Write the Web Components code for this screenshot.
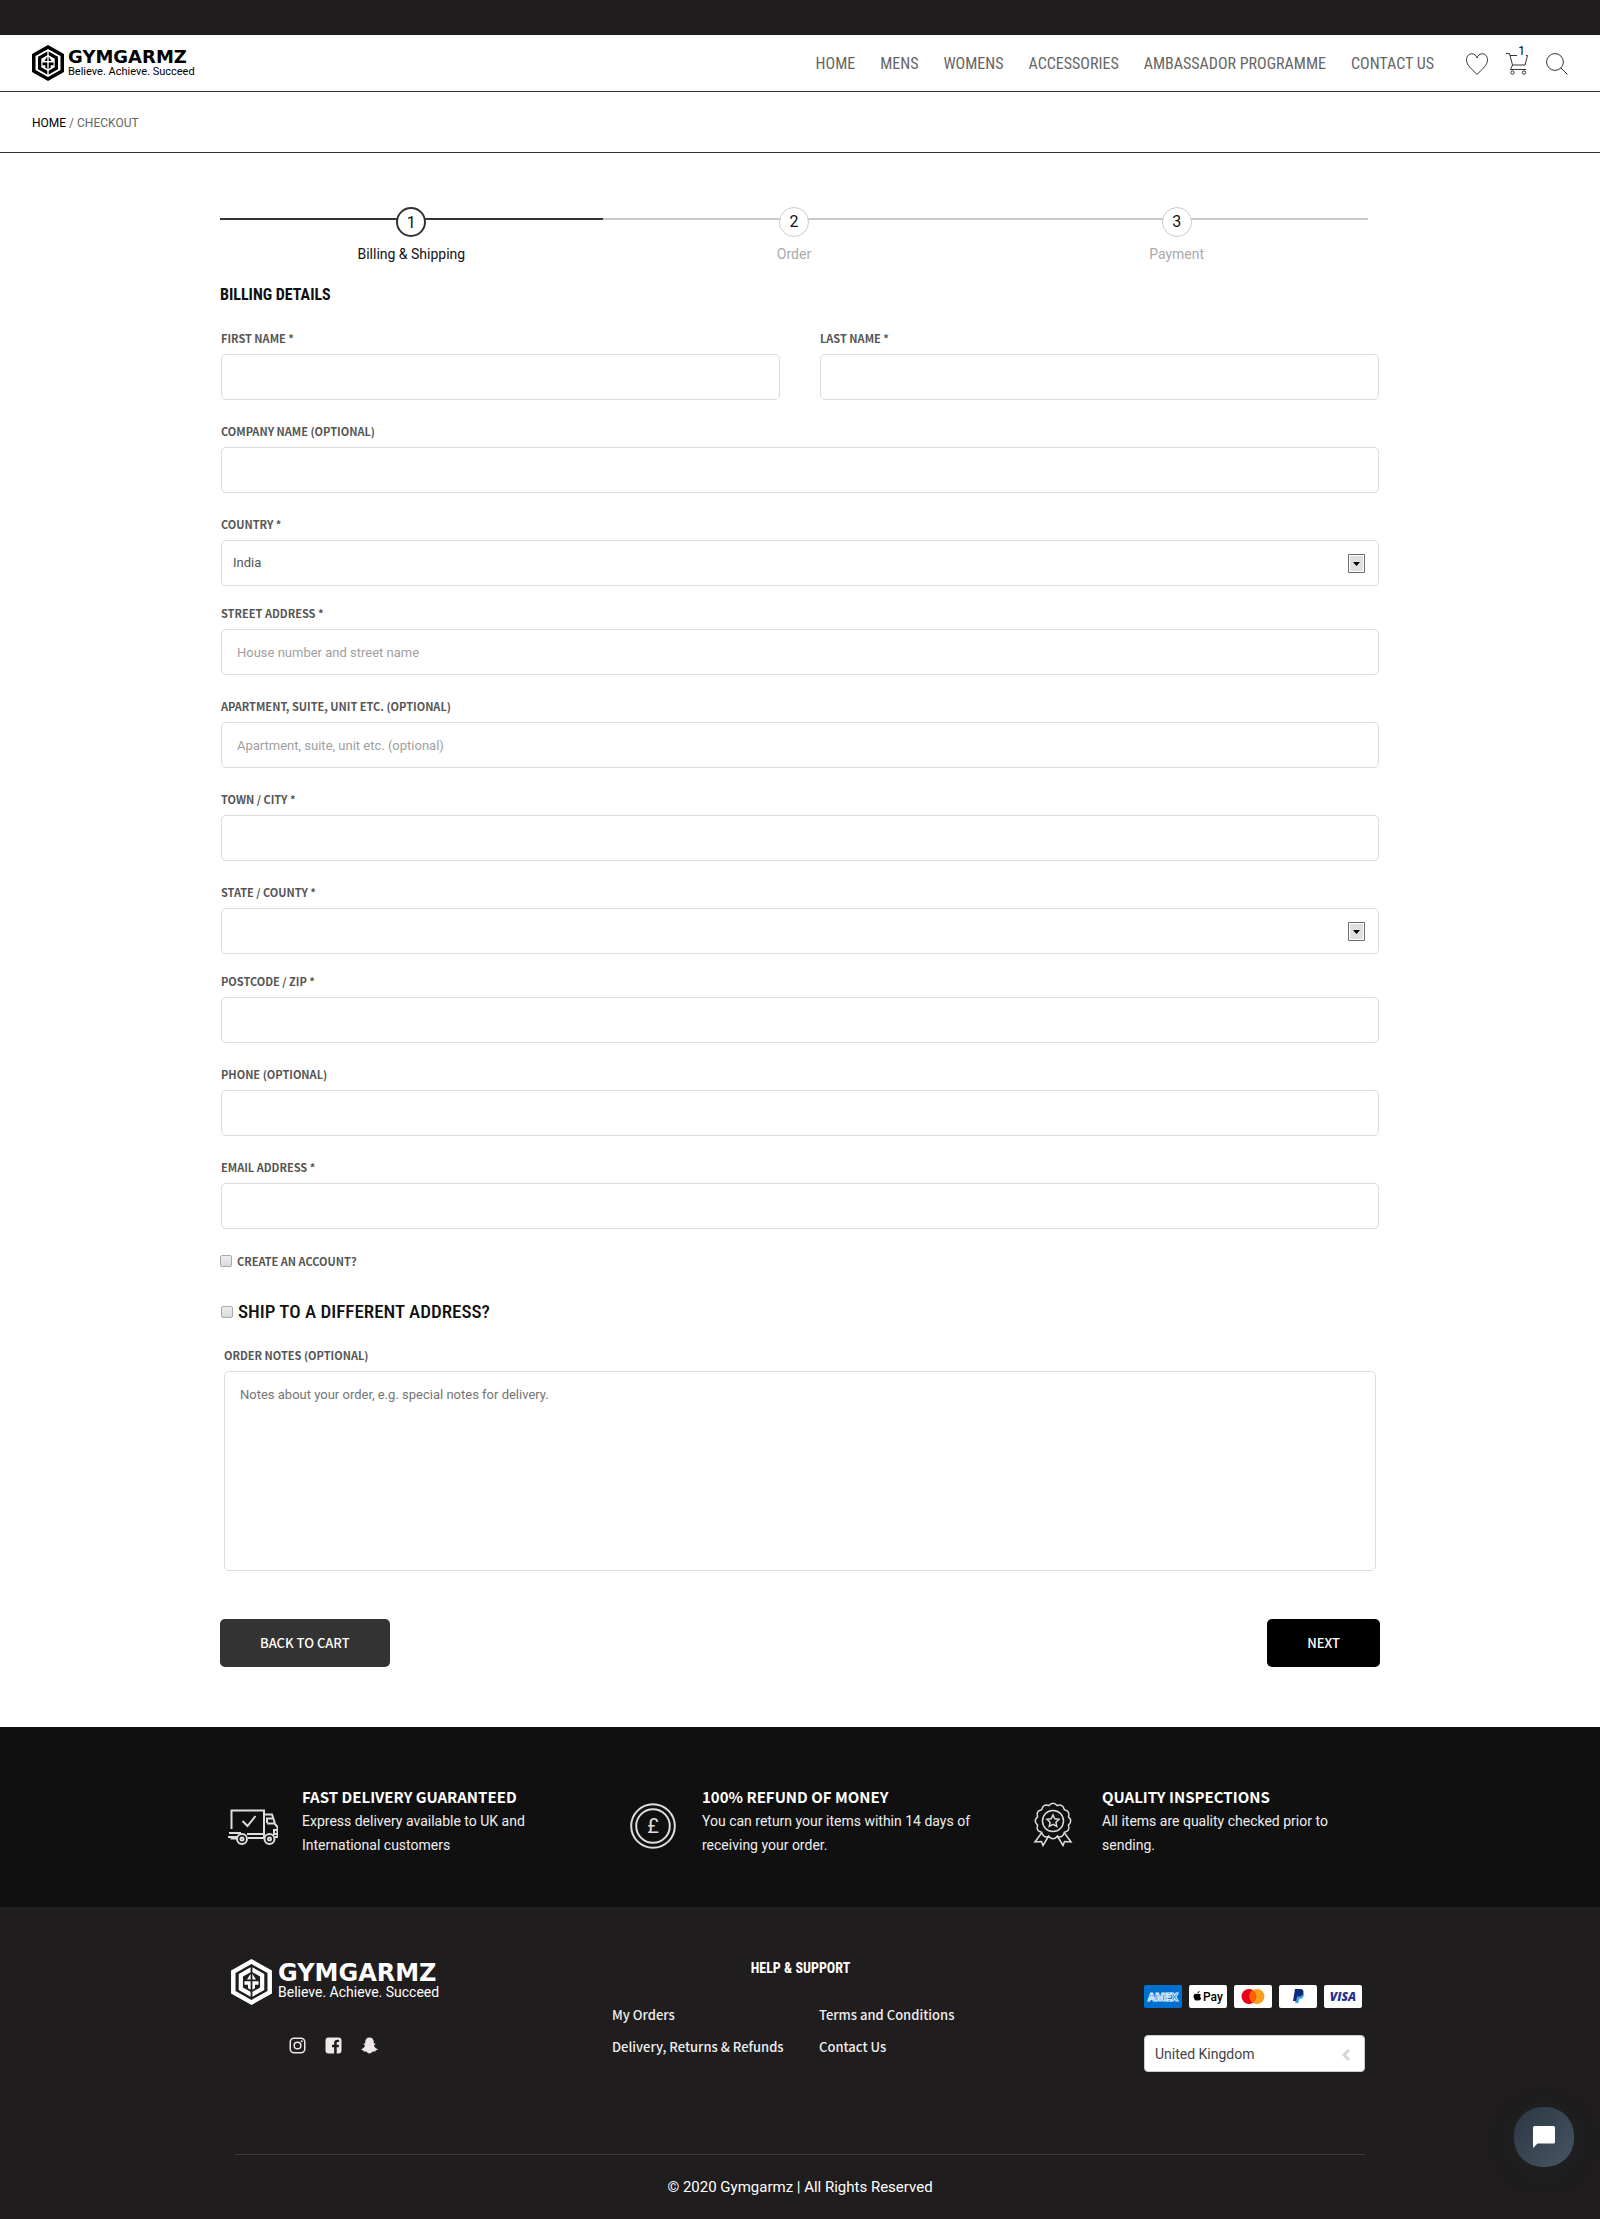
<!DOCTYPE html>
<html lang="en">
<head>
    <meta charset="UTF-8">
    <meta name="viewport" content="width=device-width, initial-scale=1.0">
    <title>Checkout - Gymgarmz</title>
    <style>
        :root {
            --ui: Roboto, "Open Sans", sans-serif;
            --narrow: "Roboto Condensed", "Liberation Sans Narrow", Roboto, sans-serif;
            --label: "Noto Sans CJK SC", "Open Sans", sans-serif;
            --dark: #1f1d1e;
            --line: #dcdcdc;
        }
        body {
            margin: 0;
            background: #fff;
            color: #555;
            font-family: var(--ui);
            font-size: 13px;
        }
        main {
            max-width: 1160px;
            margin: 0 auto;
            padding: 54px 20px 60px;
        }
        h2 {
            margin: 19px 0 24px;
            color: #111;
            font: 700 16px/24px var(--narrow);
        }
        .fields { padding: 0 1px; }
        .two {
            display: grid;
            grid-template-columns: 1fr 1fr;
            gap: 40px;
        }
        .notes { padding: 24px 4px 0; }
        .buttons {
            display: flex;
            justify-content: space-between;
            margin-top: 48px;
        }
        .features {
            background: #101010;
            padding: 60px 0 50px;
        }
        .features > div {
            display: grid;
            grid-template-columns: repeat(3, 1fr);
            max-width: 1200px;
            margin: 0 auto;
        }
    </style>
</head>
<body>
    <site-header></site-header>
    <bread-crumbs>
        <a slot="home" href="#">HOME</a>
        CHECKOUT
    </bread-crumbs>

    <main>
        <step-list>
            <step-item number="1" active>Billing &amp; Shipping</step-item>
            <step-item number="2">Order</step-item>
            <step-item number="3">Payment</step-item>
        </step-list>

        <h2>BILLING DETAILS</h2>
        <div class="fields">
            <div class="two">
                <form-field label="FIRST NAME *"></form-field>
                <form-field label="LAST NAME *"></form-field>
            </div>
            <form-field label="COMPANY NAME (OPTIONAL)"></form-field>
            <form-field label="COUNTRY *" type="select" options="India,United Kingdom"></form-field>
            <form-field label="STREET ADDRESS *" placeholder="House number and street name"></form-field>
            <form-field label="APARTMENT, SUITE, UNIT ETC. (OPTIONAL)" placeholder="Apartment, suite, unit etc. (optional)"></form-field>
            <form-field label="TOWN / CITY *"></form-field>
            <form-field label="STATE / COUNTY *" type="select" options=""></form-field>
            <form-field label="POSTCODE / ZIP *"></form-field>
            <form-field label="PHONE (OPTIONAL)"></form-field>
            <form-field label="EMAIL ADDRESS *"></form-field>
        </div>
        <check-field>CREATE AN ACCOUNT?</check-field>
        <check-field big>SHIP TO A DIFFERENT ADDRESS?</check-field>
        <div class="notes">
            <form-field label="ORDER NOTES (OPTIONAL)" type="textarea" placeholder="Notes about your order, e.g. special notes for delivery."></form-field>
        </div>
        <div class="buttons">
            <shop-button>BACK TO CART</shop-button>
            <shop-button primary>NEXT</shop-button>
        </div>
    </main>

    <section class="features">
        <div>
            <feature-card icon="truck" heading="FAST DELIVERY GUARANTEED">Express delivery available to UK and International customers</feature-card>
            <feature-card icon="pound" heading="100% REFUND OF MONEY">You can return your items within 14 days of receiving your order.</feature-card>
            <feature-card icon="medal" heading="QUALITY INSPECTIONS">All items are quality checked prior to sending.</feature-card>
        </div>
    </section>
    <site-footer></site-footer>
    <chat-button></chat-button>

    <template id="logo">
        <style>
            :host { display: inline-block; color: #000; }
            a { display: flex; align-items: center; gap: 4px; color: inherit; text-decoration: none; }
            svg { width: 32px; height: 36px; fill: currentColor; flex: none; }
            span { display: block; white-space: nowrap; }
            .name { font: 700 18px/16px "DejaVu Sans", sans-serif; }
            .tag { font: 400 11px/13px Roboto, sans-serif; }
            :host([large]) { color: #fff; }
            :host([large]) a { gap: 6px; }
            :host([large]) svg { width: 41px; height: 46px; }
            :host([large]) .name { font-size: 24px; line-height: 21px; }
            :host([large]) .tag { font-size: 14px; line-height: 17px; }
        </style>
        <a href="#">
            <svg viewBox="0 0 32 36" aria-hidden="true">
                <path fill-rule="evenodd" d="M16 0 32 9v18L16 36 0 27V9zM16 4 3.500 11v14L16 32l12.500-7V11z"/>
                <path d="M15.300 6.500v3.800l-6 3.400v8.600l6 3.400v3.800L6 24.200V11.800zM16.700 6.500v3.800l6 3.400v8.600l-6 3.400v3.800l9.300-5.300V11.800z"/>
                <path d="M15.300 11.500V16h-2.800zM16.700 11.500V16h2.800zM10.500 17.500h4.800V24l-2-1.200v-2.600h-2.800zM21.500 17.500h-4.800V24l2-1.200v-2.600h2.800z"/>
            </svg>
            <div><span class="name">GYMGARMZ</span><span class="tag">Believe. Achieve. Succeed</span></div>
        </a>
    </template>

    <template id="header">
        <style>
            :host { display: block; border-top: 35px solid var(--dark); border-bottom: 1px solid #333; }
            header { display: flex; align-items: center; justify-content: space-between; height: 56px; padding: 0 32px; }
            nav { display: flex; align-items: center; gap: 25px; padding-top: 2px; }
            nav a { color: #666; font: 400 16px/20px var(--narrow); text-decoration: none; white-space: nowrap; }
            .icons { display: flex; gap: 18px; padding-left: 7px; }
            .icons a { position: relative; width: 22px; height: 22px; }
            svg { display: block; width: 22px; height: 22px; fill: none; stroke: #333; stroke-width: 1; }
            b { position: absolute; right: 2px; top: -8px; padding: 0 1px; background: #fff; color: #000; font: 400 12px/12px Roboto, sans-serif; }
        </style>
        <header>
            <site-logo></site-logo>
            <nav>
                <a href="#">HOME</a>
                <a href="#">MENS</a>
                <a href="#">WOMENS</a>
                <a href="#">ACCESSORIES</a>
                <a href="#">AMBASSADOR PROGRAMME</a>
                <a href="#">CONTACT US</a>
                <div class="icons">
                    <a href="#" aria-label="Wishlist"><svg viewBox="0 0 22 22"><path d="M11 21.300C6 16.500.500 12.200.500 6.800.500 3 3 .800 5.800.800c2.600 0 4.500 1.700 5.200 4.200.700-2.500 2.600-4.200 5.200-4.200 2.800 0 5.300 2.200 5.300 6 0 5.400-5.500 9.700-10.500 14.500z"/></svg></a>
                    <a href="#" aria-label="Cart"><svg viewBox="0 0 22 22"><path d="M0 .500h3.500L6.500 12 4.500 16.500H20M4 2.500h17.500L19 12H6.500"/><circle cx="6.500" cy="19.500" r="1.700"/><circle cx="18" cy="19.500" r="1.700"/></svg><b>1</b></a>
                    <a href="#" aria-label="Search"><svg viewBox="0 0 22 22"><circle cx="9" cy="9" r="8.400"/><path d="m15 15 6.500 6.500"/></svg></a>
                </div>
            </nav>
        </header>
    </template>

    <template id="crumbs">
        <style>
            :host { display: block; padding: 21px 32px 19px; border-bottom: 1px solid #333; color: #666; font-size: 12px; line-height: 20px; }
            ::slotted(a) { color: #000; text-decoration: none; }
        </style>
        <slot name="home"></slot> / <slot></slot>
    </template>

    <template id="steps">
        <style>
            /* the bar stops a little short of the form's right edge */
            :host { display: grid; grid-template-columns: repeat(3, 1fr); margin-right: 12px; }
        </style>
        <slot></slot>
    </template>

    <template id="step">
        <style>
            :host {
                display: flex; flex-direction: column; align-items: center; gap: 7px;
                color: #aaa; font-size: 14px; line-height: 20px;
                background: linear-gradient(#c8c8c8, #c8c8c8) 0 11px / 100% 2px no-repeat;
            }
            :host([active]) { color: #111; background-image: linear-gradient(#333, #333); }
            b {
                box-sizing: border-box; width: 30px; height: 30px;
                border: 1px solid #ccc; border-radius: 50%; background: #fff; color: #111;
                font-weight: 400; font-size: 16px; line-height: 28px; text-align: center;
            }
            :host([active]) b { border: 2px solid #333; }
        </style>
        <b></b>
        <span><slot></slot></span>
    </template>

    <template id="field">
        <style>
            :host { display: block; margin-bottom: 24px; }
            :host([type="select"]) { margin-bottom: 20px; }
            :host([type="textarea"]) { margin-bottom: 0; }
            label { display: block; margin-bottom: 9px; color: #555; font: 700 11px/14px var(--label); }
            .box { display: grid; align-items: center; }
            .box > * { grid-area: 1 / 1; }
            input, select, textarea {
                box-sizing: border-box; display: block; width: 100%; height: 46px; margin: 0; padding: 0 15px;
                border: 1px solid var(--line); border-radius: 5px; outline: 0; background: #fff;
                color: #555; font: 400 13px/20px Roboto, sans-serif;
            }
            select { appearance: none; padding: 0 11px; }
            textarea { height: 200px; padding: 13px 15px; resize: none; }
            input::placeholder { color: #a0a0a0; }
            textarea::placeholder { color: #757575; }
            svg { width: 17px; height: 19px; justify-self: end; margin-right: 14px; pointer-events: none; }
        </style>
        <label for="control"></label>
        <div class="box"></div>
    </template>

    <template id="check">
        <style>
            :host { display: flex; align-items: center; gap: 5px; color: #555; font: 700 11px/16px var(--label); }
            :host([big]) { margin-top: 31px; padding-left: 1px; color: #111; font: 500 19px/24px var(--narrow); }
            input {
                appearance: none; flex: none; width: 12px; height: 12px; margin: 0;
                border: 1px solid #a9a9a9; border-radius: 2px; background: linear-gradient(#eee, #d9d9d9);
            }
            input:checked { background: #333; }
        </style>
        <input type="checkbox" id="box">
        <label for="box"><slot></slot></label>
    </template>

    <template id="button">
        <style>
            :host { display: block; }
            button {
                height: 48px; padding: 0 40px; border: 0; border-radius: 5px;
                background: #333; color: #fff; font: 500 13px/20px var(--label); cursor: pointer;
            }
            :host([primary]) button { background: #000; }
        </style>
        <button type="button"><slot></slot></button>
    </template>

    <template id="feature">
        <style>
            :host { display: flex; gap: 24px; padding: 0 20px 0 28px; color: #eee; }
            svg { flex: none; width: 50px; height: 50px; margin-top: 14px; fill: none; stroke: #ddd; stroke-width: 2; }
            text { fill: #ddd; stroke: none; font: 400 20px Roboto, sans-serif; }
            h3 { margin: 0 0 2px; color: #fff; font: 700 15px/20px var(--label); }
            p { margin: 0; font-size: 14px; line-height: 24px; }
        </style>
        <svg viewBox="0 0 50 50" aria-hidden="true"></svg>
        <div>
            <h3></h3>
            <p><slot></slot></p>
        </div>
    </template>

    <template id="footer">
        <style>
            :host { display: block; background: var(--dark); color: #eee; }
            footer { max-width: 1134px; margin: 0 auto; padding: 52px 4px 0 0; }
            a { color: #eee; text-decoration: none; }
            .top { display: grid; grid-template-columns: 381px 1fr 221px; height: 195px; }
            .social { display: flex; justify-content: center; gap: 19px; width: 204px; margin-top: 29px; }
            .social svg { display: block; width: 17px; height: 17px; fill: #efe6e6; }
            h3 { width: 377px; margin: 0 0 22px; color: #fff; font: 700 14px/18px var(--narrow); text-align: center; }
            ul { display: grid; grid-template-columns: 207px auto; justify-content: start; margin: 0; padding: 0; list-style: none; font: 500 13px/32px var(--label); }
            .pay { display: flex; gap: 7px; margin: 26px 0 27px; }
            .pay svg { width: 38px; height: 23px; border-radius: 2px; background: #fff; }
            .pick { display: grid; align-items: center; }
            .pick > * { grid-area: 1 / 1; }
            .pick svg { justify-self: end; width: 8px; height: 12px; margin: 2px 15px 0 0; fill: none; stroke: #d5d5d5; stroke-width: 3; pointer-events: none; }
            select {
                appearance: none; box-sizing: border-box; width: 100%; height: 37px; padding: 0 10px;
                border: 1px solid #ccc; border-radius: 4px; background: #fff; color: #444; font: 400 14px/20px Roboto, sans-serif;
            }
            .copy { margin-left: 4px; padding: 21px 0; border-top: 1px solid #3c3a3b; color: #fff; font-size: 15px; line-height: 22px; text-align: center; }
        </style>
        <footer>
            <div class="top">
                <div>
                    <site-logo large></site-logo>
                    <div class="social">
                        <a href="#" aria-label="Instagram"><svg viewBox="0 0 17 17"><path fill-rule="evenodd" d="M5 .500h7A4.500 4.500 0 0 1 16.500 5v7a4.500 4.500 0 0 1-4.500 4.500H5A4.500 4.500 0 0 1 .500 12V5A4.500 4.500 0 0 1 5 .500zM5 2a3 3 0 0 0-3 3v7a3 3 0 0 0 3 3h7a3 3 0 0 0 3-3V5a3 3 0 0 0-3-3zm3.500 2.400a4.100 4.100 0 1 1 0 8.200 4.100 4.100 0 0 1 0-8.200zm0 1.500a2.600 2.600 0 1 0 0 5.200 2.600 2.600 0 0 0 0-5.200z"/><circle cx="12.700" cy="4.300" r="1"/></svg></a>
                        <a href="#" aria-label="Facebook"><svg viewBox="0 0 17 17"><path d="M3.500.500h10a3 3 0 0 1 3 3v10a3 3 0 0 1-3 3h-1.800V10.300h2l.300-2.500h-2.300V6.300c0-.700.300-1.200 1.200-1.200h1.200V2.900c-3.300-.500-5 .700-5 3.100v1.800H7v2.500h2.100v6.200H3.500a3 3 0 0 1-3-3v-10a3 3 0 0 1 3-3z"/></svg></a>
                        <a href="#" aria-label="Snapchat"><svg viewBox="0 0 17 17"><path d="M8.500.500c2.800 0 4.300 2 4.300 4.400l-.100 1.700c.800.100 1.500-.200 1.700.300.200.700-1.300.900-1.400 1.500-.100.900 1.700 3.100 3.600 3.500.400.900-1.400 1.300-2 1.500-.300.500 0 1.100-.7 1.100-1.400-.100-2-.1-2.700.5-.8.700-1.500 1.500-2.700 1.500s-1.900-.8-2.700-1.500c-.7-.6-1.300-.6-2.700-.5-.700 0-.4-.6-.7-1.100-.6-.2-2.400-.6-2-1.500C2.300 11.500 4.100 9.300 4 8.400c-.1-.6-1.600-.8-1.400-1.500.2-.5.900-.2 1.700-.3l-.1-1.700C4.200 2.500 5.700.500 8.500.500z"/></svg></a>
                    </div>
                </div>
                <div>
                    <h3>HELP &amp; SUPPORT</h3>
                    <ul>
                        <li><a href="#">My Orders</a></li>
                        <li><a href="#">Terms and Conditions</a></li>
                        <li><a href="#">Delivery, Returns &amp; Refunds</a></li>
                        <li><a href="#">Contact Us</a></li>
                    </ul>
                </div>
                <div>
                    <div class="pay">
                        <svg viewBox="0 0 38 23" style="background:#0070d0"><text x="19" y="16" text-anchor="middle" fill="#0070d0" stroke="#d6eaff" stroke-width="1" font-family="Roboto" font-weight="900" font-size="11">AMEX</text></svg>
                        <svg viewBox="0 0 38 23"><path d="M10.600 8.900c.7.200 1 .6 1.300 1-1.300.9-1 2.600.3 3.200-.5 1.500-1.400 2.500-2.200 2.500-.6 0-.8-.3-1.400-.3s-.9.300-1.400.3c-1.200 0-2.800-2.700-2.600-4.700.1-1.600 1.500-2.500 2.600-2.200.9.300 1.100.3 1.700.1.600-.2 1.100-.2 1.700.1zM8.500 8.300c0-1.200.9-2.200 2-2.300.1 1.200-.9 2.300-2 2.300z"/><text x="14" y="16" font-family="Roboto" font-size="12" font-weight="500">Pay</text></svg>
                        <svg viewBox="0 0 38 23"><circle cx="15" cy="11.500" r="7.500" fill="#eb001b"/><circle cx="23" cy="11.500" r="7.500" fill="#f79e1b"/><path d="M19 5.200a7.500 7.500 0 0 1 0 12.600 7.500 7.500 0 0 1 0-12.600z" fill="#ff5f00"/></svg>
                        <svg viewBox="0 0 38 23"><path d="M17 7h5.500c2.500.5 2.800 2.400 2 4.300-.8 2-2.400 2.700-4.400 2.700l-.8 4h-3z" fill="#3b9bdc"/><path d="M16 4h5.300c2.300 0 3.600 1.300 3.100 3.800-.5 2.600-2.200 3.700-4.600 3.700H18L17.100 16H14z" fill="#0b2a7b"/></svg>
                        <svg viewBox="0 0 38 23"><text x="19" y="16" text-anchor="middle" fill="#26308c" font-family="Open Sans" font-weight="800" font-style="italic" font-size="12">VISA</text></svg>
                    </div>
                    <div class="pick">
                        <select aria-label="Delivery country"><option>United Kingdom</option><option>India</option></select>
                        <svg viewBox="0 0 8 12"><path d="M7 1 2 6l5 5"/></svg>
                    </div>
                </div>
            </div>
            <div class="copy">© 2020 Gymgarmz | All Rights Reserved</div>
        </footer>
    </template>

    <template id="chat">
        <style>
            :host { position: fixed; right: 26px; bottom: 52px; }
            button {
                display: grid; place-items: center; width: 60px; height: 60px; padding: 0; border: 0; border-radius: 28px;
                background: linear-gradient(135deg, #2b3640, #475565); box-shadow: 0 4px 24px rgba(33, 43, 48, .4); cursor: pointer;
            }
            svg { width: 22px; height: 22px; fill: #fff; }
        </style>
        <button type="button" aria-label="Open chat"><svg viewBox="0 0 22 22"><path d="M1.500 0h19A1.500 1.500 0 0 1 22 1.500v14.500a1.500 1.500 0 0 1-1.500 1.500H4.500L0 22V1.500A1.500 1.500 0 0 1 1.500 0z"/></svg></button>
    </template>

    <script>
        // opens the shadow root and fills it from a template
        class Base extends HTMLElement {
            constructor(id){
                super();
                this.attachShadow({mode : 'open'});
                this.shadowRoot.append(document.getElementById(id).content.cloneNode(true));
            }
            find(selector){
                return this.shadowRoot.querySelector(selector);
            }
        }

        // wavy ring of the medal
        function scallop(cx, cy, r, n){
            let at = (radius, i) => {
                let a = Math.PI * i / n;
                return (cx + radius * Math.sin(a)).toFixed(2) + ' ' + (cy - radius * Math.cos(a)).toFixed(2);
            };
            let d = 'M' + at(r, -1);
            for (let i = 0; i < n; i++) d += 'Q' + at(r + 4, i * 2) + ' ' + at(r, i * 2 + 1);
            return d + 'z';
        }

        const icons = {
            truck : `<path d="M3.500 28V9.500H36V36M19 33h16M20 37h16M36 13.500h8l3 9M39 22v-4.500h6M39 22.500h7.500l3 3.500v10H47M49 29h-3v4h3M1 32h12M0 36h9M3.500 36v1.500H9"/>
                <circle cx="14" cy="38" r="5"/><circle cx="14" cy="38" r="1.500"/><circle cx="41.500" cy="38" r="5"/><circle cx="41.500" cy="38" r="1.500"/><path d="m14.500 20 5 5 8-10"/>`,
            pound : `<circle cx="25" cy="25" r="21.800"/><circle cx="25" cy="25" r="16.800"/><text x="25" y="32" text-anchor="middle">£</text>`,
            medal : `<path stroke-width="1.500" d="${scallop(25, 20, 16, 12)}"/><circle cx="25" cy="20" r="10.500" stroke-width="1.500"/>
                <path stroke-width="1.500" d="m25 14 1.800 3.800 4.200.5-3.100 2.900.8 4.100-3.700-2-3.700 2 .8-4.100-3.100-2.900 4.200-.5zM13.500 32 7 41l6.500-.5 1.500 4 6-10M36.500 32 43 41l-6.500-.5-1.500 4-6-10"/>`
        };

        class SiteLogo extends Base {
            constructor(){ super('logo'); }
        }
        class SiteHeader extends Base {
            constructor(){ super('header'); }
        }
        class BreadCrumbs extends Base {
            constructor(){ super('crumbs'); }
        }
        class StepList extends Base {
            constructor(){ super('steps'); }
        }
        class StepItem extends Base {
            constructor(){ super('step'); }
            connectedCallback(){
                this.find('b').textContent = this.getAttribute('number');
            }
        }

        class FormField extends Base {
            constructor(){ super('field'); }
            connectedCallback(){
                let type = this.getAttribute('type') || 'input';
                let control = document.createElement(type);
                control.id = 'control';
                this.find('label').textContent = this.getAttribute('label');
                this.find('.box').append(control);
                if (type == 'select') {
                    this.getAttribute('options').split(',').forEach(name => control.add(new Option(name)));
                    this.find('.box').insertAdjacentHTML('beforeend', `<svg viewBox="0 0 17 19">
                        <path d="M.5.5h16v18H.5z" fill="#fff" stroke="#6b6b6b"/><path d="M2 2h13v15H2z" fill="#e0e0e0"/><path d="M5 8h7L8.500 12z"/></svg>`);
                } else {
                    control.placeholder = this.getAttribute('placeholder') || '';
                }
            }
        }

        class CheckField extends Base {
            constructor(){ super('check'); }
        }
        class ShopButton extends Base {
            constructor(){ super('button'); }
        }
        class FeatureCard extends Base {
            constructor(){ super('feature'); }
            connectedCallback(){
                this.find('h3').textContent = this.getAttribute('heading');
                this.find('svg').innerHTML = icons[this.getAttribute('icon')];
            }
        }
        class SiteFooter extends Base {
            constructor(){ super('footer'); }
        }
        class ChatButton extends Base {
            constructor(){ super('chat'); }
        }

        customElements.define("site-logo", SiteLogo);
        customElements.define("site-header", SiteHeader);
        customElements.define("bread-crumbs", BreadCrumbs);
        customElements.define("step-list", StepList);
        customElements.define("step-item", StepItem);
        customElements.define("form-field", FormField);
        customElements.define("check-field", CheckField);
        customElements.define("shop-button", ShopButton);
        customElements.define("feature-card", FeatureCard);
        customElements.define("site-footer", SiteFooter);
        customElements.define("chat-button", ChatButton);
    </script>
</body>
</html>
